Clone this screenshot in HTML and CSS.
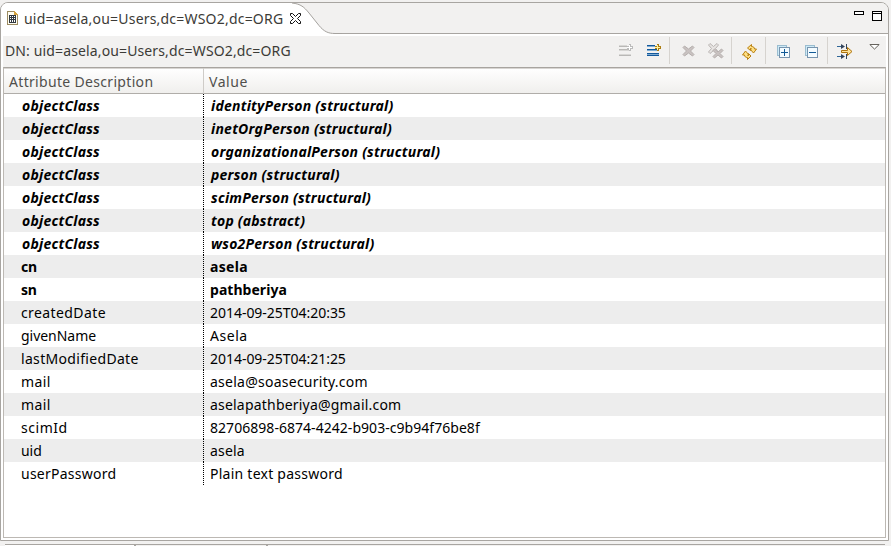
FILE: index.html
```
<!DOCTYPE html>
<html lang="en">
<head>
<meta charset="utf-8">
<title>Entry editor</title>
<link rel="stylesheet" href="styles.css">
</head>
<body>
<section class="editor">
  <header class="tabbar">
    <div class="tab">
      <svg class="doc" width="11" height="14" viewBox="0 0 11 14" shape-rendering="crispEdges"><path fill="#fffdf2" stroke="#9c8c62" d="M.5.5h7l3 3v10H.5z"/><path fill="#d3a240" d="M7 0h1v1h1v1h1v1h1v1H7z"/><path fill="#303840" d="M2 4h7v8H2z"/><path fill="#fff" d="M3 5h1v1H3zM5 5h1v1H5zM7 5h1v1H7zM3 7h1v1H3zM5 7h1v1H5zM7 7h1v1H7zM3 9h1v2H3zM5 9h1v2H5zM7 9h1v2H7z"/></svg>
      <span class="tab-title s2">uid=asela,ou=Users,dc=WSO2,dc=ORG</span>
      <svg class="close" width="11" height="11" viewBox="0 0 11 11"><path fill="#fff" stroke="#111" d="M.5.5h2l3 3 3-3h2v2l-3 3 3 3v2h-2l-3-3-3 3h-2v-2l3-3-3-3z"/></svg>
    </div>
    <svg class="curve" width="52" height="31" viewBox="0 0 52 31"><path fill="#fff" d="M0 0h4c8 1 10 4 15 10l10 13c4 5 8 7 15 7.500H52V31H0z"/><path fill="none" stroke="#a5a29e" d="M2 0c9 1 12 4 17 10l10 12.500c5 6 9 8 16 8H52"/></svg>
    <div class="rest">
      <svg width="28" height="11" viewBox="0 0 28 11" shape-rendering="crispEdges"><path fill="#fff" stroke="#000" d="M.5.5h9v3h-9zM18.500.5h9v9h-9z"/><path fill="#000" d="M18 2h10v1H18z"/></svg>
    </div>
  </header>
  <div class="content">
    <div class="toolbar">
      <span class="dn">DN: uid=asela,ou=Users,dc=WSO2,dc=ORG</span>
      <div class="tools">
        <svg class="new dim" width="15" height="13" viewBox="0 0 15 13" shape-rendering="crispEdges"><path fill="#d8d7d5" d="M0 1h8v1H0zM0 6h12v1H0zM0 10h12v1H0z"/><path fill="#b9b8b6" d="M0 5h12v1H0zM0 2h8v1H0zM0 11h12v1H0z"/><path fill="#bbb" d="M10 0h2v2h2v3h-2v2h-2V5H8V2h2z"/><path fill="#fff" d="M10 1h1v2h2v1h-2v2h-1V4H8V3h2z"/></svg>
        <svg class="new" width="15" height="13" viewBox="0 0 15 13" shape-rendering="crispEdges"><path fill="#7eabd2" d="M0 2h8v1H0zM0 6h12v1H0zM0 10h12v1H0z"/><path fill="#14599b" d="M0 1h8v1H0zM0 5h12v1H0zM0 9h12v1H0zM0 11h12v1H0z"/><path fill="#ad7d10" d="M10 0h2v2h2v3h-2v2h-2V5H8V2h2z"/><path fill="#fff2a0" d="M10 1h1v2h2v1h-2v2h-1V4H8V3h2z"/></svg>
        <i class="sep"></i>
        <svg class="del" width="13" height="12" viewBox="0 0 13 12"><path fill="#c9c2c1" stroke="#b5afad" d="M1 2.500 2.500 1l4 3 4-3L12 2.500 8.500 6l3.500 3.500-1.500 1.500-4-3-4 3L1 9.500 4.500 6z"/></svg>
        <svg class="delall" width="16" height="16" viewBox="0 0 16 16"><path fill="#e8e5e3" stroke="#b9b4b2" d="M.5 2 2 .5l3.500 3L9 .5 10.500 2l-3 3.500 3 3.500L9 10.500l-3.500-3-3.500 3L.5 9l3-3.500z"/><path fill="#c9c2c1" stroke="#b5afad" d="M5 7.500 6.500 6l3.500 3L13.500 6 15 7.500 12 10.500l3 3-1.500 1.500-3.500-3-3.500 3L5 13.500l3-3z"/></svg>
        <i class="sep"></i>
        <svg class="sync" width="15" height="16" viewBox="0 0 15 16"><path fill="#ffe084" stroke="#b98012" d="M5.500 4 9.500.5v2c2 0 3 1 3 2.500h2l-3 4-3.500-4h1.500c0-.5-.3-.5-1-.5v2zM9 12l-3.500 3.500v-2C3.500 13.500 2.500 12.500 2.500 11H.5l3-4L7 11H5.500c0 .5.200.5 1 .5v-2z"/></svg>
        <i class="sep"></i>
        <svg class="exp" width="13" height="13" viewBox="0 0 13 13" shape-rendering="crispEdges"><path fill="#cdeaf7" stroke="#9bbdd0" d="M.5.5h9v10h-9z"/><path fill="#f3fbff" stroke="#7894ae" d="M2.500 2.500h10v10h-10z"/><path fill="#125a97" d="M4 7h7v1H4zM7 4h1v7H7z"/></svg>
        <svg class="col" width="13" height="13" viewBox="0 0 13 13" shape-rendering="crispEdges"><path fill="#cdeaf7" stroke="#9bbdd0" d="M.5.5h9v10h-9z"/><path fill="#f3fbff" stroke="#7894ae" d="M2.500 2.500h10v10h-10z"/><path fill="#125a97" d="M4 7h7v1H4z"/></svg>
        <i class="sep"></i>
        <svg class="filter" width="17" height="15" viewBox="0 0 17 15"><path fill="#2f6698" d="M0 2h5v1H0zM0 12h5v1H0z"/><path fill="#34455c" d="M4 0l4 2.500L4 5zM4 10l4 2.500L4 15zM9 0h1v5H9zM9 10h1v5H9z"/><path fill="#ffe298" stroke="#ad720b" d="M4.500 6.500h6v-3l4.500 4-4.500 4v-3h-6z"/></svg>
        <svg class="menu" width="11" height="6" viewBox="0 0 11 6"><path fill="#fff" stroke="#66635d" d="M.8.5h9.400l-4.700 4.600z"/></svg>
      </div>
    </div>
    <div class="table">
      <div class="head"><span class="s3">Attribute Description</span><span class="s5">Value</span></div>
      <div class="row oc"><span>objectClass</span><span>identityPerson (structural)</span></div>
      <div class="row oc"><span>objectClass</span><span>inetOrgPerson (structural)</span></div>
      <div class="row oc"><span>objectClass</span><span>organizationalPerson (structural)</span></div>
      <div class="row oc"><span>objectClass</span><span>person (structural)</span></div>
      <div class="row oc"><span>objectClass</span><span>scimPerson (structural)</span></div>
      <div class="row oc"><span>objectClass</span><span>top (abstract)</span></div>
      <div class="row oc"><span>objectClass</span><span>wso2Person (structural)</span></div>
      <div class="row must"><span class="s0">cn</span><span class="s3">asela</span></div>
      <div class="row must"><span class="s0">sn</span><span class="s0">pathberiya</span></div>
      <div class="row"><span class="s4">createdDate</span><span class="sn">2014-09-25T04:20:35</span></div>
      <div class="row"><span class="sn">givenName</span><span class="s5">Asela</span></div>
      <div class="row"><span class="s3">lastModifiedDate</span><span class="sn">2014-09-25T04:21:25</span></div>
      <div class="row"><span class="s4">mail</span><span class="s25">asela@soasecurity.com</span></div>
      <div class="row"><span class="s4">mail</span><span class="s2">aselapathberiya@gmail.com</span></div>
      <div class="row"><span class="s5">scimId</span><span class="s0">82706898-6874-4242-b903-c9b94f76be8f</span></div>
      <div class="row"><span class="sn">uid</span><span class="s2">asela</span></div>
      <div class="row"><span class="s25">userPassword</span><span class="s25">Plain text password</span></div>
    </div>
  </div>
</section>
<footer class="next"><i class="active"></i><i class="second"></i><i class="others"></i></footer>
</body>
</html>
```
FILE: styles.css
```
* { box-sizing: border-box; }
body {
  margin: 0;
  padding-top: 2px;
  width: 891px;
  height: 546px;
  overflow: hidden;
  background: #f2f1f0;
  color: #3c3b37;
  font: 14px/23px "Noto Sans", "Open Sans", sans-serif;
}
svg { display: block; flex: none; }
.editor {
  width: 889px;
  height: 539px;
  border: 1px solid #a8a5a1;
  border-radius: 8px 8px 0 0;
  background: #fff;
  overflow: hidden;
}
.tabbar { display: flex; height: 31px; }
.tab { display: flex; flex: none; width: 289px; padding-left: 6px; background: #fff; }
.doc { margin-top: 8px; }
.tab-title { flex: none; width: 264px; margin-left: 6px; padding-top: 4px; white-space: nowrap; }
.close { position: relative; z-index: 1; margin: 10px 0 0 2px; }
.curve { background: #f2f1f0; }
.rest {
  display: flex;
  flex: 1;
  justify-content: flex-end;
  padding: 8px 6px 0 0;
  border-bottom: 1px solid #a8a5a1;
  background: #f2f1f0;
}
.content { margin: 2px 2px 0; }
.toolbar { display: flex; justify-content: space-between; height: 31px; background: #f2f1f0; }
.dn { padding: 3px 0 0 2px; white-space: nowrap; letter-spacing: .13px; }
.tools { display: flex; align-items: flex-start; }
.sep { width: 1px; height: 27px; margin-top: 1px; background: #d6d3cf; }
.new { margin: 8px 7px 0 6px; }
.del { margin: 9px 13px 0 12px; }
.delall { margin: 7px 7px 0 0; }
.sync { margin: 8px 8px 0 10px; }
.exp { margin: 9px 15px 0 11px; }
.col { margin: 9px 9px 0 0; }
.filter { margin: 8px 15px 0 9px; }
.menu { margin: 8px 6px 0 0; }
.table {
  height: 471px;
  border: 1px solid #bcb8b3;
  border-top-color: #a8a49f;
  background: #fff;
}
.head, .row { display: grid; grid-template-columns: 200px 1fr; white-space: nowrap; }
.head {
  height: 26px;
  border-bottom: 1px solid #b0ada9;
  box-shadow: inset 0 1px #d8d5d2;
  background: linear-gradient(#fff, #f0efed);
  color: #504f4c;
  line-height: 27px;
}
.head span { padding-left: 5px; }
.head span:first-child { border-right: 1px solid #cfccc8; }
.row { height: 23px; color: #000; }
.row:nth-child(odd) { background: #ededed; }
.row span { padding-left: 6px; }
.row span:first-child {
  padding-left: 17px;
  background: repeating-linear-gradient(#000 0 1px, transparent 1px 2px) right / 1px 100% no-repeat;
}
.oc { font-weight: bold; font-style: italic; letter-spacing: .23px; }
.row.oc span { padding-left: 7px; }
.row.oc span:first-child { padding-left: 18px; }
.must { font-weight: bold; }
.sn { letter-spacing: -.03px; }
.s0 { letter-spacing: .04px; }
.s2 { letter-spacing: .2px; }
.s25 { letter-spacing: .25px; }
.s3 { letter-spacing: .32px; }
.s4 { letter-spacing: .4px; }
.s5 { letter-spacing: .55px; }
.must .s0:first-child { letter-spacing: -.3px; }
.next { display: flex; width: 880px; height: 2px; margin: 3px 0 0 5px; border-top: 1px solid #a8a5a1; }
.next i { height: 1px; border-right: 2px solid #a8a5a1; }
.active { width: 131px; background: #fff; }
.second { width: 132px; }
.next .others { flex: 1; border: 0; }
```
